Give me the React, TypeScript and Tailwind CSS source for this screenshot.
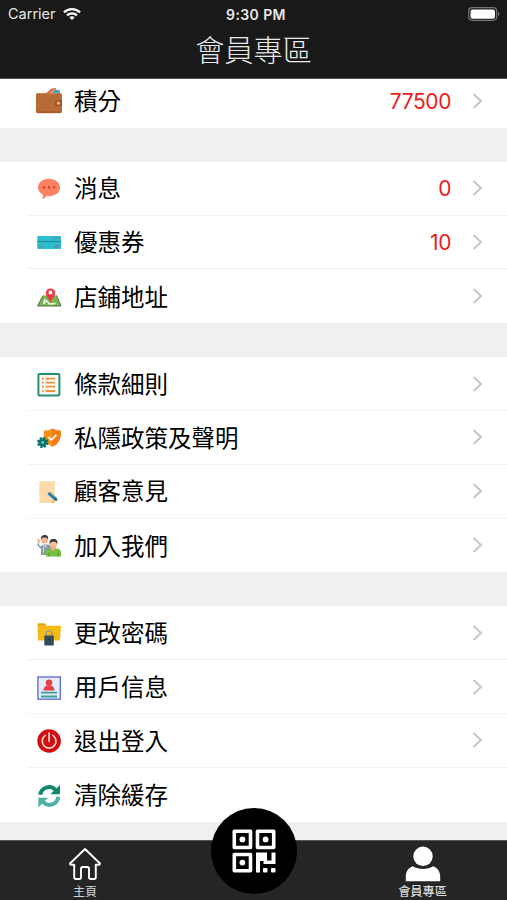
import type { ReactNode } from "react";

const CJK = "font-['Inter','Noto_Sans_CJK_TC',sans-serif]";

function Icon({ children }: { children: ReactNode }) {
  return (
    <svg viewBox="0 0 28 28" className="h-7 w-7 shrink-0 overflow-visible">
      {children}
    </svg>
  );
}

const Wallet = () => (
  <Icon>
    <path d="M11 6l6-4.500 4-.5-1 5z" fill="#df5e52" />
    <path d="M14 6l5-4 2 1-2 4z" fill="#ef9b4b" />
    <path d="M16 7l4.500-4.500 4.500 1V8h-9z" fill="#38aed2" />
    <rect x="1" y="6" width="26" height="20.300" rx="2" fill="#b96b35" />
    <path d="M2 6.500h24" stroke="#c98349" strokeWidth="1" />
    <path d="M1.500 25h25" stroke="#a65829" strokeWidth="1.300" />
    <path d="M27 13.200h-4.200a3 3 0 0 0 0 6H27z" fill="#98502a" />
    <circle cx="23.500" cy="16.200" r="1.600" fill="#f4c46e" />
  </Icon>
);

const Message = () => (
  <Icon>
    <path d="M14 4.800c6.200 0 11 3.900 11 8.800s-4.800 8.600-11 8.600c-.8 0-1.700 0-2.500-.2-1.300 1.700-2.600 2.600-4.500 3 .7-1.500 1-2.700.8-4.300C4.900 19.100 3 16.700 3 13.600c0-4.900 4.800-8.800 11-8.800z" fill="#fc8262" />
    <g fill="#cb4c3c">
      <circle cx="9" cy="13.400" r="1.300" />
      <circle cx="14" cy="13.400" r="1.300" />
      <circle cx="19" cy="13.400" r="1.300" />
    </g>
  </Icon>
);

const Coupon = () => (
  <Icon>
    <rect x="2.300" y="8" width="23.700" height="13" rx="0.500" fill="#2cbdcf" />
    <path d="M2.300 13.500h23.700" stroke="#288b9b" strokeWidth="1.200" />
    <path d="M18.500 10H25M4 17.800h5M4.500 19.500h3M20.500 17.600h5M19 19.500h5" stroke="#5c919b" strokeWidth="1.100" />
  </Icon>
);

const MapPin = () => (
  <Icon>
    <path d="M8 13.500h13.500L26 24H2.500z" fill="#75b94c" />
    <path d="M10 17l-1.500 5 3-3.500 3 3.500 6-.5" fill="none" stroke="#f4f7e8" strokeWidth="1.300" />
    <path d="M8 13.500L2.500 24H26l-4.500-10.500" fill="none" stroke="#596d52" strokeWidth="1" />
    <path d="M15.500 21c-.7-4-4.700-6-4.700-9.900a4.700 4.700 0 0 1 9.400 0c0 3.900-4 5.900-4.700 9.900z" fill="#ed3d43" />
    <circle cx="15.500" cy="10.500" r="1.900" fill="#fff" />
  </Icon>
);

const Terms = () => (
  <Icon>
    <rect x="3.400" y="4" width="21" height="21.600" rx="1" fill="#fff8ee" stroke="#249078" strokeWidth="2" />
    <path d="M10.500 8.600H20M10.500 12.600H20M10.500 16.600H20M10.500 21H20" stroke="#ee9443" strokeWidth="1.900" />
    <path d="M7 8.600h1.700M7 12.600h1.700M7 16.600h1.700M7 21h1.700" stroke="#ca8a50" strokeWidth="1.700" />
  </Icon>
);

const Privacy = () => (
  <Icon>
    <path d="M17.300 5.500c2.800 1.600 5.500 2.100 8.500 2.200.5 7.600-2 13.200-8.500 16-6.500-2.800-9-8.400-8.500-16 3-.1 5.700-.6 8.500-2.200z" fill="#fa901c" />
    <path d="M17.300 5.500c2.800 1.600 5.500 2.100 8.500 2.200.5 7.600-2 13.200-8.500 16z" fill="#f47b12" />
    <path d="M13.500 14.200l2.900 2.700 5-5" fill="none" stroke="#fff" strokeWidth="1.700" />
    <circle cx="7.700" cy="19.500" r="4.300" fill="#0a7569" />
    <circle cx="7.700" cy="19.500" r="4.700" fill="none" stroke="#0a7569" strokeWidth="2" strokeDasharray="2.300 1.391" />
    <circle cx="7.700" cy="19.500" r="1.300" fill="#92d3c5" />
  </Icon>
);

const Feedback = () => (
  <Icon>
    <path d="M4.300 4.200h15.500V26H4.300z" fill="#fddaaa" />
    <path d="M15.500 26l4.300-4.500V26z" fill="#efc371" />
    <path d="M13.500 15.900L21.300 22.700" stroke="#2075a8" strokeWidth="3.200" />
    <path d="M21 21.200l2 3-3.300-1.500z" fill="#174e7a" />
    <path d="M14 15.700l6 5" stroke="#55acd2" strokeWidth="0.700" />
  </Icon>
);

const Join = () => (
  <Icon>
    <path d="M3 10.500l2 5 4-2h4c2 0 3 1 3 3V24H6v-6l-3.500-3.500z" fill="#8799a3" />
    <path d="M2 8l2-.5L5.500 11l-2 1.500z" fill="#efba90" />
    <circle cx="9.500" cy="9" r="3.500" fill="#f0b98d" />
    <path d="M6 8.500C5.500 5.500 7 4 9.800 4s3.700 1.500 3.200 4.500l-1.500-2h-4z" fill="#35333a" />
    <path d="M8 13.500l2 3 2-3M8.500 16.500v5" fill="none" stroke="#d6dce0" />
    <path d="M11 25.500V21c0-2.500 2-3.500 4-3.500h6c3 0 5 1.500 5 4v4z" fill="#75bd43" />
    <path d="M15.500 17.500l2.800 3 2.800-3V15h-5.600z" fill="#e8b184" />
    <circle cx="18.500" cy="13" r="3.500" fill="#f1bd91" />
    <path d="M14.700 13c-.8-3.500 1-5 3.800-5s4.500 1.500 3.700 5l-1.700-2.200h-4z" fill="#35333a" />
    <path d="M14 21.500v4M23 21.500v4" stroke="#4f9631" />
  </Icon>
);

const Password = () => (
  <Icon>
    <g transform="translate(0 .8)">
      <path d="M2.500 6V5c0-.8.500-1.300 1.300-1.300h5.800l2 2.300H25c.7 0 1.200.5 1 1.200L25 19.500c-.1.800-.6 1.300-1.400 1.300H4.500c-.8 0-1.400-.5-1.500-1.300z" fill="#f5ba16" />
      <path d="M2.500 5.500h9L9.600 3.700H3.800z" fill="#dc9d0b" />
      <path d="M11 17v-3c0-4 6-4 6 0v3" fill="none" stroke="#93999a" strokeWidth="1.300" />
      <rect x="9.300" y="15.700" width="9.500" height="9.900" rx="0.600" fill="#344d5b" />
      <circle cx="14" cy="20" r="1" fill="#213543" />
    </g>
  </Icon>
);

const Profile = () => (
  <Icon>
    <g transform="translate(0 .6)">
      <rect x="2.900" y="3.400" width="22.400" height="22.200" fill="#e5edfa" stroke="#6671d9" strokeWidth="1.400" />
      <circle cx="14" cy="9.200" r="3.300" fill="#e54046" />
      <path d="M8.500 16.800c0-3 1.600-4.600 3.700-4.600h3.600c2.100 0 3.700 1.600 3.700 4.600z" fill="#e54046" />
      <path d="M6 19h16M6 22.900h16" stroke="#3c9f8e" strokeWidth="1.900" />
    </g>
  </Icon>
);

const Power = () => (
  <Icon>
    <circle cx="14.100" cy="15" r="11.800" fill="#d01010" />
    <path d="M10.300 9.400a6.900 6.900 0 1 0 7.600 0M14.100 7v8.300" fill="none" stroke="#ffd9d4" strokeWidth="1.700" strokeLinecap="round" />
  </Icon>
);

const Refresh = () => (
  <Icon>
    <path d="M5.200 13.800A9 9 0 0 1 20.500 8.800" fill="none" stroke="#15876f" strokeWidth="4" />
    <path d="M25 4v9.200h-9.700z" fill="#15876f" />
    <path d="M23.300 15.800A9 9 0 0 1 8 21.200" fill="none" stroke="#50b2a5" strokeWidth="4" />
    <path d="M3.300 26.500v-9.700h9.900z" fill="#50b2a5" />
  </Icon>
);

type Item = { label: string; icon: ReactNode; value?: string; plain?: boolean };

const groups: Item[][] = [
  [
    { label: "消息", icon: <Message />, value: "0" },
    { label: "優惠券", icon: <Coupon />, value: "10" },
    { label: "店鋪地址", icon: <MapPin /> },
  ],
  [
    { label: "條款細則", icon: <Terms /> },
    { label: "私隱政策及聲明", icon: <Privacy /> },
    { label: "顧客意見", icon: <Feedback /> },
    { label: "加入我們", icon: <Join /> },
  ],
  [
    { label: "更改密碼", icon: <Password /> },
    { label: "用戶信息", icon: <Profile /> },
    { label: "退出登入", icon: <Power /> },
    { label: "清除緩存", icon: <Refresh />, plain: true },
  ],
];

function Row({ item, last }: { item: Item; last: boolean }) {
  return (
    <div className="flex h-[53.8px] pl-7">
      <div className={`flex flex-1 items-center pr-[24px] pl-[7px] ${last ? "" : "border-b border-[#f3f3f3]"}`}>
        {item.icon}
        <span className="ml-[11px] flex-1 pt-[2px] text-[23.5px] leading-none whitespace-nowrap">{item.label}</span>
        {item.value && (
          <span className="mr-[21px] pt-px text-[21px] leading-none tracking-[-0.4px] text-[#ea1c1c]">{item.value}</span>
        )}
        {!item.plain && (
          <svg viewBox="0 0 11 16" className="h-4 w-[11px]">
            <path d="M1.500 1l7.500 7-7.500 7" fill="none" stroke="#c5c5c9" strokeWidth="1.900" />
          </svg>
        )}
      </div>
    </div>
  );
}

export default function App() {
  return (
    <div className={`flex h-[900px] w-[507px] flex-col overflow-hidden bg-[#f0f0f0] text-black ${CJK}`}>
      <header className="z-10 h-[79px] shrink-0 border-b border-[#555] bg-[#191919] text-[#e8e8e8]">
        <div className="grid h-7 grid-cols-[1fr_auto_1fr] items-center pr-[7px] pl-2">
          <div className="flex items-center gap-[7px]">
            <span className="text-[14.5px] leading-none">Carrier</span>
            <svg viewBox="0 0 18 14" className="h-[14px] w-[18px]" fill="none" stroke="#fff" strokeWidth="2.300">
              <path d="M1 5.400c4.500-4.500 11.500-4.500 16 0M4 8.400c2.800-2.800 7.200-2.800 10 0" />
              <path d="M6.300 10.300c1.500-1.500 3.900-1.500 5.400 0L9 13z" fill="#fff" stroke="none" />
            </svg>
          </div>
          <span className="pt-px pl-[4px] text-[14px] leading-none font-semibold tracking-[0.4px]">9:30 PM</span>
          <svg viewBox="0 0 32 14" className="h-[14px] w-8 justify-self-end">
            <rect x="0.700" y="0.700" width="28" height="12.600" rx="3.500" fill="none" stroke="#777" strokeWidth="1.200" />
            <rect x="2.500" y="2.400" width="24.500" height="9.300" rx="2" fill="#fff" />
            <path d="M30 4.700q3 2.300 0 4.600z" fill="#777" />
          </svg>
        </div>
        <h1 className="mt-[7px] text-center text-[29.2px] leading-[32px] font-light">會員專區</h1>
      </header>

      <main className="min-h-0 flex-1 overflow-hidden">
        <section className="-mt-[5px] bg-white">
          <Row item={{ label: "積分", icon: <Wallet />, value: "77500" }} last />
        </section>
        {groups.map((items, index) => (
          <section key={index} className="mt-[34px] bg-white">
            {items.map((item, i) => (
              <Row key={item.label} item={item} last={i === items.length - 1} />
            ))}
          </section>
        ))}
      </main>

      <nav className="relative flex h-[60px] shrink-0 justify-between border-t border-[#555] bg-[#252525] text-[#d5d5d5]">
        <div className="flex w-[170px] flex-col items-center pt-[6px]">
          <svg viewBox="0 0 34 34" className="h-[34px] w-[34px]" fill="none" stroke="#fff" strokeWidth="1.900" strokeLinejoin="round">
            <path d="M17 2L2 16.500q0 1.300 1.300 1.300h2.900v12.500q0 1.700 1.700 1.700h3.300q1.800 0 1.800-1.700v-8.500q0-1.800 1.800-1.800h4.400q1.800 0 1.800 1.800v8.500q0 1.700 1.800 1.700h3.300q1.700 0 1.700-1.700V17.800h2.900q1.300 0 1.300-1.300z" />
          </svg>
          <span className="mt-[4px] text-[12px] leading-[13px]">主頁</span>
        </div>
        <div className="flex w-[169px] flex-col items-center pt-[5px]">
          <svg viewBox="0 0 36 36" className="h-9 w-9" fill="#fff">
            <circle cx="18" cy="10.300" r="9.700" />
            <path d="M.8 35.200V31c0-5.200 2.300-8.800 7-10.700 6.300 3.600 14.200 3.600 20.400 0 4.700 1.900 7 5.500 7 10.700v4.200z" />
          </svg>
          <span className="mt-[3px] text-[12.2px] leading-[13px] font-medium">會員專區</span>
        </div>
        <button className="absolute -top-[33px] left-[211px] flex h-[86px] w-[86px] items-center justify-center rounded-full bg-black">
          <svg viewBox="0 0 44 44" className="h-11 w-11" fill="#fff">
            <g fill="none" stroke="#fff" strokeWidth="3.600" strokeLinejoin="round">
              <rect x="2.300" y="2.300" width="16.200" height="16.200" />
              <rect x="25.500" y="2.300" width="16.200" height="16.200" />
              <rect x="2.300" y="25.500" width="16.200" height="16.200" />
            </g>
            <circle cx="10.400" cy="10.400" r="2.900" />
            <circle cx="33.600" cy="10.400" r="2.900" />
            <circle cx="10.400" cy="33.600" r="2.900" />
            <path d="M24 23.500h11v8h4.500v-8h4V35H31.500v-3H28v11.500h-4z" />
            <rect x="31" y="39" width="4.500" height="4.500" rx="1" />
            <rect x="39" y="39" width="4.500" height="4.500" rx="1" />
          </svg>
        </button>
      </nav>
    </div>
  );
}
